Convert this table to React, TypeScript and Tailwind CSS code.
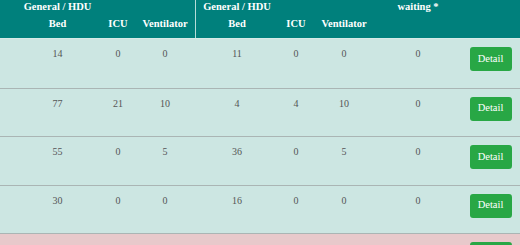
import React from "react";

type Row = { cells: string[]; tone: "ok" | "alert" };

const rows: Row[] = [
  { cells: ["14", "0", "0", "11", "0", "0", "0"], tone: "ok" },
  { cells: ["77", "21", "10", "4", "4", "10", "0"], tone: "ok" },
  { cells: ["55", "0", "5", "36", "0", "5", "0"], tone: "ok" },
  { cells: ["30", "0", "0", "16", "0", "0", "0"], tone: "ok" },
  { cells: ["", "", "", "", "", "", ""], tone: "alert" },
];

const cols = "grid grid-cols-[101px_34px_60px_84px_34px_62px_86px_59px]";

function DetailButton() {
  return (
    <button className="w-[42px] h-[24px] rounded-[3px] bg-[#28a745] text-white text-[10.5px] leading-none">
      Detail
    </button>
  );
}

export default function App() {
  return (
    <div
      className="w-[520px] h-[245px] overflow-hidden bg-white"
      style={{ fontFamily: '"Liberation Serif", "Times New Roman", serif' }}
    >
      <div className="-mt-[20px]">
        {/* table head */}
        <div className="relative h-[59px] bg-[#00807c] text-white font-bold text-[10.5px] leading-[12px] border-b border-[#d6ebe8]">
          <div className={`${cols} pt-[21px] h-[34px]`}>
            <div className="pl-[14px] text-center">General / HDU</div>
            <div />
            <div />
            <div className="text-center">General / HDU</div>
            <div />
            <div />
            <div className="text-center">waiting *</div>
            <div className="text-center -mt-[10px]">Contact</div>
          </div>
          <div className={`${cols} h-[24px] pt-[4px]`}>
            <div className="pl-[14px] text-center">Bed</div>
            <div className="text-center">ICU</div>
            <div className="text-center">Ventilator</div>
            <div className="text-center">Bed</div>
            <div className="text-center">ICU</div>
            <div className="text-center">Ventilator</div>
            <div />
            <div />
          </div>
          <div className="absolute top-0 bottom-0 left-[195px] w-px bg-[#b5dcd8]" />
        </div>

        {/* table body */}
        {rows.map((r, i) => (
          <div
            key={i}
            className={`${cols} h-[48.5px] text-[10px] text-[#555] ${
              i > 0 ? "border-t border-[#aab5b4]" : ""
            } ${r.tone === "alert" ? "bg-[#e8c9cb]" : "bg-[#cce6e2]"}`}
          >
            {r.cells.map((c, j) => (
              <div
                key={j}
                className={`text-center pt-[9px] leading-[12px] ${j === 0 ? "pl-[14px]" : ""}`}
              >
                {c}
              </div>
            ))}
            <div className="flex justify-center pt-[8px]">
              <DetailButton />
            </div>
          </div>
        ))}
      </div>
    </div>
  );
}
